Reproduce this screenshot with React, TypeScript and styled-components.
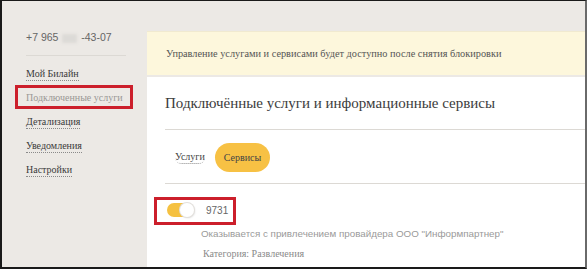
import React, { useState } from "react";
import styled, { createGlobalStyle } from "styled-components";

const GlobalStyle = createGlobalStyle`
  html, body {
    margin: 0;
    padding: 0;
    background: #ffffff;
  }
`;

const Frame = styled.div`
  box-sizing: border-box;
  width: 587px;
  height: 269px;
  overflow: hidden;
  border-top: 1px solid #1a1a1a;
  border-left: 2px solid #1a1a1a;
  border-bottom: 2px solid #1a1a1a;
  border-right: 2px solid #6a6a6a;
  background: #ece9e5;
  display: grid;
  grid-template-columns: 145px 1fr;
  font-family: "Liberation Serif", "DejaVu Serif", serif;
`;

const Sidebar = styled.nav`
  padding: 29px 0 0 24px;
`;

const Phone = styled.div`
  font-family: "Liberation Sans", Arial, sans-serif;
  font-size: 10.5px;
  color: #666;
  height: 15px;
  line-height: 15px;
`;

const Blurred = styled.span`
  display: inline-block;
  background: #dcdad7;
  filter: blur(1.5px);
  width: 15px;
  height: 9px;
  margin: 0 1px;
  vertical-align: middle;
`;

const Divider = styled.div`
  height: 1px;
  background: #dcd9d4;
`;

const SideDivider = styled(Divider)`
  width: 100px;
  margin-top: 10px;
`;

const Menu = styled.ul`
  list-style: none;
  margin: 12px 0 0;
  padding: 0;
  display: flex;
  flex-direction: column;
  gap: 8px;
`;

const MenuItem = styled.li<{ $active?: boolean; $marked?: boolean }>`
  position: relative;
  height: 16px;
  font-size: 10px;
  color: ${(p) => (p.$active ? "#9a9895" : "#3a3a3a")};

  span {
    border-bottom: 1px dotted ${(p) => (p.$active ? "transparent" : "#8a8a8a")};
    padding-bottom: 1px;
  }

  &::after {
    content: "";
    display: ${(p) => (p.$marked ? "block" : "none")};
    position: absolute;
    left: -11px;
    top: -7px;
    width: 118px;
    height: 24px;
    box-sizing: border-box;
    border: 3px solid #cc1f2b;
  }
`;

const Main = styled.main`
  padding-top: 30px;
  display: flex;
  flex-direction: column;
  gap: 2px;
`;

const Notice = styled.div`
  height: 44px;
  box-sizing: border-box;
  background: #fdf7dc;
  border-top: 1px solid #f1ead0;
  padding: 0 0 0 19px;
  display: flex;
  align-items: center;
  font-size: 10.3px;
  color: #555;
`;

const Card = styled.section`
  flex: 1;
  background: #ffffff;
  padding-left: 18px;
`;

const Title = styled.h2`
  margin: 0;
  padding-top: 18px;
  height: 34px;
  font-weight: normal;
  font-size: 15px;
  color: #3c3c3c;
`;

const Tabs = styled.div`
  height: 53px;
  display: flex;
  align-items: center;
  gap: 10px;
  padding-left: 10px;
  padding-top: 2px;
  box-sizing: border-box;
`;

const Tab = styled.button<{ $active?: boolean }>`
  border: none;
  font-family: inherit;
  font-size: 10px;
  cursor: pointer;
  color: #444;
  background: ${(p) => (p.$active ? "#f7c144" : "transparent")};
  border-radius: 15px;
  height: ${(p) => (p.$active ? "29px" : "auto")};
  padding: ${(p) => (p.$active ? "0 9px" : "0")};
  ${(p) =>
    !p.$active &&
    `
    border-bottom: 1px dotted #888;
    line-height: 12px;
  `}
`;

const Service = styled.div`
  padding: 13px 0 0 0;
`;

const ServiceHead = styled.div`
  position: relative;
  display: flex;
  align-items: center;
  gap: 12px;
  height: 26px;
  padding-left: 2px;

  &::after {
    content: "";
    position: absolute;
    left: -11px;
    top: 0;
    width: 82px;
    height: 28px;
    box-sizing: border-box;
    border: 3px solid #cc1f2b;
  }
`;

const Toggle = styled.button<{ $on: boolean }>`
  position: relative;
  width: 27px;
  height: 14px;
  border: none;
  padding: 0;
  border-radius: 7px;
  background: ${(p) => (p.$on ? "#f5c141" : "#d6d3cf")};
  cursor: pointer;

  &::after {
    content: "";
    position: absolute;
    top: 0;
    left: ${(p) => (p.$on ? "13px" : "0")};
    width: 14px;
    height: 14px;
    border-radius: 50%;
    background: #ffffff;
    box-shadow: 0 0 0 1px #e3e0dc, 1px 1px 2px rgba(0, 0, 0, 0.15);
  }
`;

const Code = styled.span`
  font-family: "Liberation Sans", Arial, sans-serif;
  font-size: 10px;
  color: #666;
`;

const Provider = styled.div`
  margin: 5px 0 0 36px;
  font-family: "Liberation Sans", Arial, sans-serif;
  font-size: 9.8px;
  color: #9a9a9a;
`;

const Category = styled.div`
  margin: 9px 0 0 38px;
  font-size: 10px;
  color: #8a8a8a;
`;

function App() {
  const [tab, setTab] = useState("info");
  const [on, setOn] = useState(true);

  return (
    <>
      <GlobalStyle />
      <Frame>
        <Sidebar>
          <Phone>
            +7 965 <Blurred /> -43-07
          </Phone>
          <SideDivider />
          <Menu>
            <MenuItem>
              <span>Мой Билайн</span>
            </MenuItem>
            <MenuItem $active $marked>
              <span>Подключенные услуги</span>
            </MenuItem>
            <MenuItem>
              <span>Детализация</span>
            </MenuItem>
            <MenuItem>
              <span>Уведомления</span>
            </MenuItem>
            <MenuItem>
              <span>Настройки</span>
            </MenuItem>
          </Menu>
        </Sidebar>
        <Main>
          <Notice>
            Управление услугами и сервисами будет доступно после снятия блокировки
          </Notice>
          <Card>
            <Title>Подключённые услуги и информационные сервисы</Title>
            <Divider />
            <Tabs>
              <Tab $active={tab === "services"} onClick={() => setTab("services")}>
                Услуги
              </Tab>
              <Tab $active={tab === "info"} onClick={() => setTab("info")}>
                Сервисы
              </Tab>
            </Tabs>
            <Divider />
            <Service>
              <ServiceHead>
                <Toggle $on={on} onClick={() => setOn((v) => !v)} />
                <Code>9731</Code>
              </ServiceHead>
              <Provider>
                Оказывается с привлечением провайдера ООО "Информпартнер"
              </Provider>
              <Category>Категория: Развлечения</Category>
            </Service>
          </Card>
        </Main>
      </Frame>
    </>
  );
}

export default App;
